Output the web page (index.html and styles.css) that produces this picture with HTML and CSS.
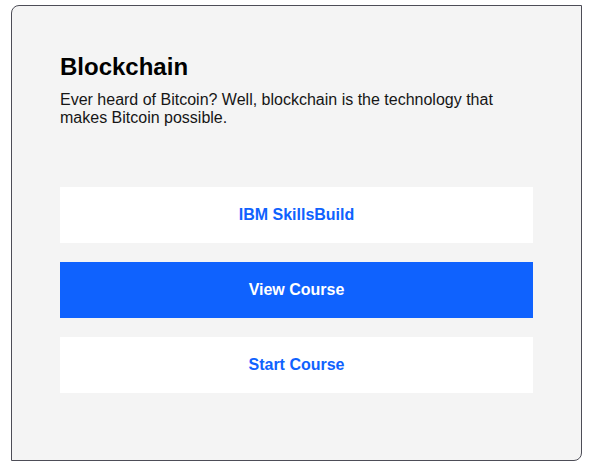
FILE: index.html
```html
<!DOCTYPE html>
<html lang="en">
<head>
<meta charset="utf-8">
<title>Blockchain</title>
<link rel="stylesheet" href="styles.css">
</head>
<body>
<div class="card">
  <h2 class="card-title">Blockchain</h2>
  <p class="card-text">Ever heard of Bitcoin? Well, blockchain is the technology that makes Bitcoin possible.</p>
  <div class="actions">
    <a class="btn btn-light" href="#">IBM SkillsBuild</a>
    <a class="btn btn-primary" href="#">View Course</a>
    <a class="btn btn-light" href="#">Start Course</a>
  </div>
</div>
</body>
</html>
```

FILE: styles.css
```css
html, body {
  margin: 0;
  padding: 0;
  background: #ffffff;
}
body {
  padding: 5px 0 0 11px;
  font-family: "Liberation Sans", Arial, sans-serif;
}
.card {
  box-sizing: border-box;
  width: 571px;
  background: #f4f4f4;
  border: 1px solid #4d4d57;
  border-radius: 8px 0 8px 0;
  padding: 47px 48px 67px 48px;
}
.card-title {
  margin: 0;
  font-size: 24px;
  line-height: 28px;
  font-weight: 700;
  color: #000000;
}
.card-text {
  margin: 10px 0 0 0;
  font-size: 16px;
  line-height: 18px;
  color: #161616;
}
.actions {
  margin-top: 60px;
  display: flex;
  flex-direction: column;
  gap: 19px;
}
.btn {
  display: flex;
  align-items: center;
  justify-content: center;
  height: 56px;
  font-size: 16px;
  font-weight: 700;
  text-decoration: none;
}
.btn-light {
  background: #ffffff;
  color: #0f62fe;
}
.btn-primary {
  background: #0f62fe;
  color: #ffffff;
}
```
